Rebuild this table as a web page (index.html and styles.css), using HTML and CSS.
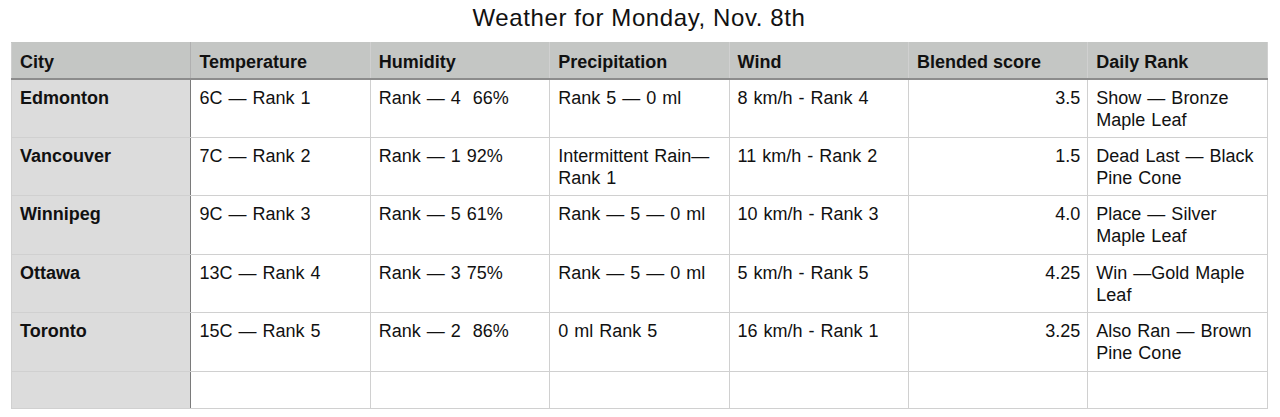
FILE: index.html
```html
<!DOCTYPE html>
<html>
<head>
<meta charset="utf-8">
<link rel="stylesheet" href="styles.css">
</head>
<body>
<div class="page">
  <h1 class="title">Weather for Monday, Nov. 8th</h1>
  <table class="weather">
    <colgroup>
      <col><col><col><col><col><col><col>
    </colgroup>
    <thead>
      <tr>
        <th>City</th>
        <th>Temperature</th>
        <th>Humidity</th>
        <th>Precipitation</th>
        <th>Wind</th>
        <th>Blended score</th>
        <th>Daily Rank</th>
      </tr>
    </thead>
    <tbody>
      <tr>
        <th class="city">Edmonton</th>
        <td>6C — Rank 1</td>
        <td>Rank — 4&nbsp; 66%</td>
        <td>Rank 5 — 0 ml</td>
        <td>8 km/h - Rank 4</td>
        <td class="num">3.5</td>
        <td>Show — Bronze Maple Leaf</td>
      </tr>
      <tr>
        <th class="city">Vancouver</th>
        <td>7C — Rank 2</td>
        <td>Rank — 1 92%</td>
        <td>Intermittent Rain— Rank 1</td>
        <td>11 km/h - Rank 2</td>
        <td class="num">1.5</td>
        <td>Dead Last — Black Pine Cone</td>
      </tr>
      <tr>
        <th class="city">Winnipeg</th>
        <td>9C — Rank 3</td>
        <td>Rank — 5 61%</td>
        <td>Rank — 5 — 0 ml</td>
        <td>10 km/h - Rank 3</td>
        <td class="num">4.0</td>
        <td>Place — Silver Maple Leaf</td>
      </tr>
      <tr>
        <th class="city">Ottawa</th>
        <td>13C — Rank 4</td>
        <td>Rank — 3 75%</td>
        <td>Rank — 5 — 0 ml</td>
        <td>5 km/h - Rank 5</td>
        <td class="num">4.25</td>
        <td>Win —Gold Maple Leaf</td>
      </tr>
      <tr>
        <th class="city">Toronto</th>
        <td>15C — Rank 5</td>
        <td>Rank — 2&nbsp; 86%</td>
        <td>0 ml Rank 5</td>
        <td>16 km/h - Rank 1</td>
        <td class="num">3.25</td>
        <td>Also Ran — Brown Pine Cone</td>
      </tr>
      <tr class="empty">
        <th class="city"></th>
        <td></td><td></td><td></td><td></td><td></td><td></td>
      </tr>
    </tbody>
  </table>
</div>
</body>
</html>
```

FILE: styles.css
```css
html, body {
  margin: 0;
  padding: 0;
  background: #ffffff;
}

body {
  font-family: "Liberation Sans", Arial, Helvetica, sans-serif;
  color: #111111;
}

.page {
  padding: 0 13px 0 11px;
}

.title {
  margin: 0;
  height: 42px;
  line-height: 36px;
  text-align: center;
  font-size: 24px;
  font-weight: normal;
  letter-spacing: 0.6px;
  color: #111111;
}

.weather {
  width: 1256px;
  table-layout: fixed;
  border-collapse: collapse;
  font-size: 18px;
  line-height: 22px;
  border: 1px solid #c8c8c8;
}

.weather col {
  width: 179.4px;
}

.weather th,
.weather td {
  border: 1px solid #d0d0d0;
  padding: 0 7px 0 8px;
  text-align: left;
  vertical-align: top;
}

.weather thead th {
  background: #c4c6c4;
  border-bottom: 2px solid #8c8c8c;
  border-top-color: #c4c6c4;
  font-weight: bold;
  height: 36px;
  padding-top: 8px;
  padding-bottom: 0;
  box-sizing: border-box;
  vertical-align: top;
}

.weather tbody tr {
  height: 58.6px;
}

.weather tbody td,
.weather tbody th {
  padding-top: 7px;
}

.weather tbody td {
  word-spacing: 1px;
}

.weather .city {
  background: #dcdcdc;
  font-weight: bold;
  border-right: 1px solid #7a7a7a;
}

.weather thead th:first-child {
  border-right: 1px solid #b0b0b0;
}

.weather .num {
  text-align: right;
}

.weather tr.empty {
  height: 37px;
}
```
